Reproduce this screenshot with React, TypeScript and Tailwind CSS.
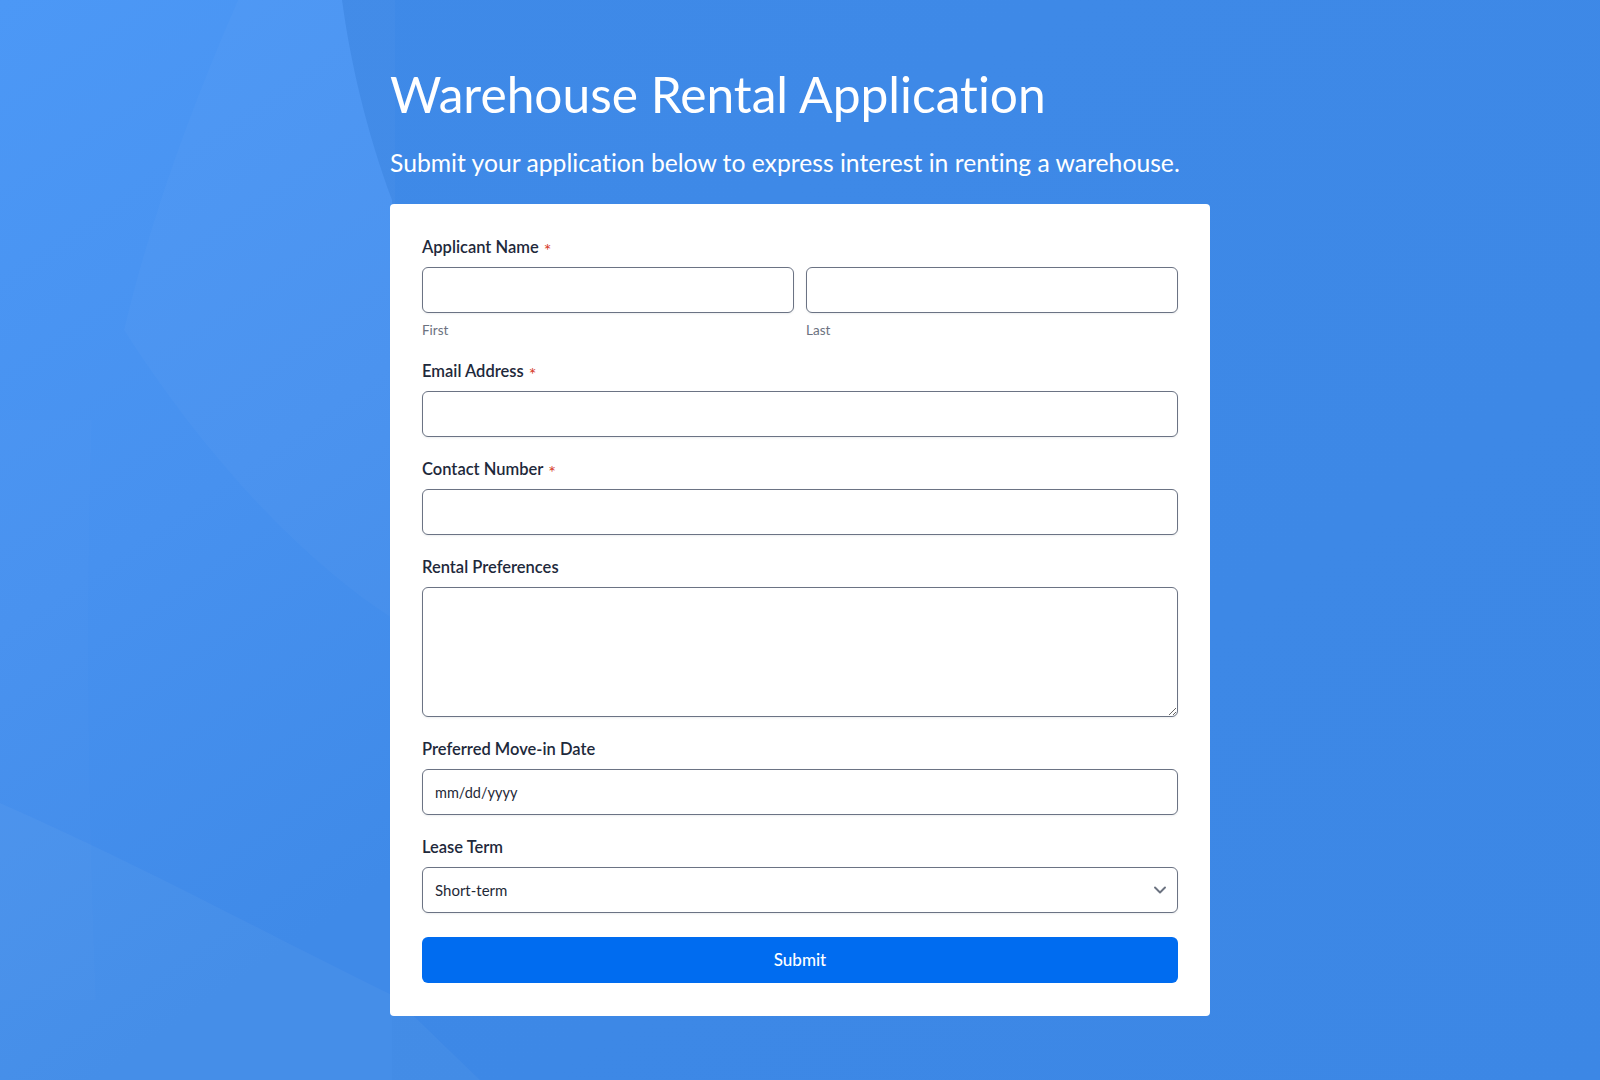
import { ChevronDown } from "lucide-react";

type FieldProps = {
  label: string;
  required?: boolean;
  children: React.ReactNode;
};

function Field({ label, required, children }: FieldProps) {
  return (
    <div className="flex flex-col">
      <label className="mb-2 flex items-center text-[16.5px] leading-6 font-semibold text-[#1e293b]">
        {label}
        {required && (
          <span className="ml-[5px] translate-y-[3px] text-[18px] leading-6 font-normal text-[#d63a2a]">*</span>
        )}
      </label>
      {children}
    </div>
  );
}

const inputClass =
  "h-[46px] w-full rounded-md border border-[#6b7384] bg-white px-3 text-[14.5px] text-[#1f2937] shadow-[0_1px_2px_rgba(15,23,42,0.08)] outline-none";

function Background() {
  return (
    <svg
      className="pointer-events-none absolute inset-0 h-full w-full"
      viewBox="0 0 1600 1080"
      preserveAspectRatio="none"
    >
      <defs>
        <linearGradient id="base" x1="0" y1="0" x2="1" y2="1">
          <stop offset="0" stopColor="#3f8ae8" />
          <stop offset="1" stopColor="#3c87e5" />
        </linearGradient>
        <linearGradient id="left" x1="0" y1="0" x2="0.25" y2="1">
          <stop offset="0" stopColor="#4c98f6" />
          <stop offset="0.55" stopColor="#4791ef" />
          <stop offset="1" stopColor="#3f8ae8" />
        </linearGradient>
      </defs>
      <rect width="1600" height="1080" fill="url(#base)" />
      <path d="M0 0 H342 C350 60 366 130 392 200 L392 1080 H0 Z" fill="url(#left)" />
      <path
        d="M238 0 C190 110 150 220 124 330 C200 450 300 560 395 620 L395 0 Z"
        fill="#ffffff"
        opacity="0.025"
      />
      <path d="M0 803 C130 860 260 930 392 995 L480 1080 H0 Z" fill="#ffffff" opacity="0.035" />
      <path d="M92 420 C86 600 88 800 96 1000 L0 1000 V420 Z" fill="#ffffff" opacity="0.012" />
    </svg>
  );
}

export default function App() {
  return (
    <div className="relative min-h-screen w-full overflow-hidden font-['Lato','Noto_Sans',sans-serif] [font-variant-ligatures:none]">
      <Background />

      <main className="relative z-10 mx-auto w-[820px] pt-[65px] pb-16">
        <h1 className="text-[49.7px] leading-[58px] font-normal text-white">Warehouse Rental Application</h1>
        <p className="mt-6 text-[24.7px] leading-8 text-white">
          Submit your application below to express interest in renting a warehouse.
        </p>

        <form
          className="mt-[25px] flex flex-col gap-5 rounded bg-white px-8 pt-[31px] pb-[33px]"
          onSubmit={(e) => e.preventDefault()}
        >
          <Field label="Applicant Name" required>
            <div className="grid grid-cols-2 gap-3">
              <div className="flex flex-col">
                <input type="text" className={inputClass} />
                <span className="mt-2 text-[13.5px] leading-[18px] text-[#6b7280]">First</span>
              </div>
              <div className="flex flex-col">
                <input type="text" className={inputClass} />
                <span className="mt-2 text-[13.5px] leading-[18px] text-[#6b7280]">Last</span>
              </div>
            </div>
          </Field>

          <Field label="Email Address" required>
            <input type="email" className={inputClass} />
          </Field>

          <Field label="Contact Number" required>
            <input type="tel" className={inputClass} />
          </Field>

          <Field label="Rental Preferences">
            <textarea className="h-[130px] w-full rounded-md border border-[#6b7384] bg-white px-3 py-2 text-[14.5px] text-[#1f2937] shadow-[0_1px_2px_rgba(15,23,42,0.08)] outline-none" />
          </Field>

          <Field label="Preferred Move-in Date">
            <input
              type="text"
              placeholder="mm/dd/yyyy"
              className={inputClass + " placeholder:text-[#1f2937]"}
            />
          </Field>

          <Field label="Lease Term">
            <div className="relative">
              <select className={inputClass + " appearance-none pr-10 text-[15px]"} defaultValue="short">
                <option value="short">Short-term</option>
                <option value="long">Long-term</option>
              </select>
              <ChevronDown
                className="pointer-events-none absolute top-1/2 right-[8px] h-5 w-5 -translate-y-1/2 text-[#6b7280]"
                strokeWidth={2.3}
              />
            </div>
          </Field>

          <button
            type="submit"
            className="mt-1 h-[46px] w-full rounded-md bg-[#006cf0] text-[17px] font-medium text-white"
          >
            Submit
          </button>
        </form>
      </main>
    </div>
  );
}
